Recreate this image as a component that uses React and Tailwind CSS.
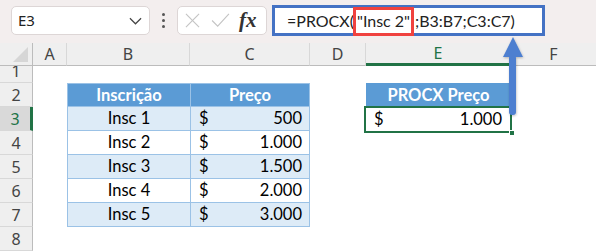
import React from 'react';

/* ── Data ───────────────────────────────────────────────────── */
const COLS = [
  { id: 'A', w: 'w-[34px]' },
  { id: 'B', w: 'w-[123px]' },
  { id: 'C', w: 'w-[120px]' },
  { id: 'D', w: 'w-[56px]' },
  { id: 'E', w: 'w-[145px]' },
  { id: 'F', w: 'flex-1' },
];
const ITEMS = [
  { name: 'Insc 1', price: '500' },
  { name: 'Insc 2', price: '1.000' },
  { name: 'Insc 3', price: '1.500' },
  { name: 'Insc 4', price: '2.000' },
  { name: 'Insc 5', price: '3.000' },
];

const UI = { fontFamily: '"Noto Sans", "Open Sans", sans-serif' };
const CELL = { fontFamily: 'Lato, "Noto Sans", sans-serif' };

/* ── Top bar ────────────────────────────────────────────────── */
const TopBar = () => (
  <div className="h-[43px] bg-[#f3eeee] flex items-start pt-[5px] pl-[11px] shrink-0" style={UI}>
    {/* Name box */}
    <div className="w-[139px] h-[29px] mt-[1px] bg-white rounded-[5px] border border-[#ddd6d6] flex items-center justify-between pl-[6px] pr-[7px]">
      <span className="text-[15px] text-[#222]">E3</span>
      <svg viewBox="0 0 14 8" className="w-[13px] h-[8px]" fill="none" stroke="#444" strokeWidth="1.3">
        <polyline points="1,1 7,7 13,1" />
      </svg>
    </div>
    {/* Dots */}
    <div className="w-[27px] h-[31px] flex flex-col items-center justify-center gap-[3px]">
      <span className="w-[3px] h-[3px] bg-[#555] rounded-full" />
      <span className="w-[3px] h-[3px] bg-[#555] rounded-full" />
      <span className="w-[3px] h-[3px] bg-[#555] rounded-full" />
    </div>
    {/* Cancel / enter / fx */}
    <div className="w-[90px] h-[29px] mt-[1px] bg-white rounded-[5px] border border-[#ddd6d6] flex items-center pl-[7px]">
      <svg viewBox="0 0 16 16" className="w-[15px] h-[15px]" fill="none" stroke="#c4c4c4" strokeWidth="1.2">
        <line x1="1" y1="1" x2="15" y2="15" />
        <line x1="15" y1="1" x2="1" y2="15" />
      </svg>
      <svg viewBox="0 0 20 16" className="w-[19px] h-[15px] ml-[11px]" fill="none" stroke="#c4c4c4" strokeWidth="1.2">
        <polyline points="1,8 7,14 19,1" />
      </svg>
      <span className="ml-[9px] text-[21px] italic font-semibold text-[#333] leading-none" style={{ fontFamily: '"Liberation Serif", "DejaVu Serif", serif' }}>
        fx
      </span>
    </div>
    {/* Formula bar */}
    <div
      className="ml-[5px] w-[273px] h-[31px] border-[3px] border-[#4472c4] bg-white flex items-center pl-[12px] text-[16px] text-[#222] whitespace-nowrap"
      style={{ fontFamily: 'Lato, "Noto Sans", sans-serif' }}
    >
      <span>=PROCX(</span>
      <span className="relative ml-[3px] mr-[5px]">
        "Insc 2"
        <span className="absolute -left-[4px] -right-[4px] -top-[2px] -bottom-[3px] border-[3px] border-[#f0423f]" />
      </span>
      <span>;B3:B7;C3:C7)</span>
    </div>
  </div>
);

/* ── Sheet pieces ───────────────────────────────────────────── */
const RowHeader = ({ r }) => {
  const active = r === 3;
  const first = r === 1;
  return (
    <div
      className={`w-[33px] shrink-0 flex justify-center overflow-hidden text-[16px] leading-[24px] border-b border-b-[#d8d8d8] ${
        first ? 'items-end' : 'items-center'
      } ${
        active
          ? 'bg-[#d9d9d9] text-[#217346] border-r-[3px] border-r-[#217346]'
          : 'bg-[#efefef] text-[#444] border-r border-r-[#bcbcbc]'
      }`}
      style={UI}
    >
      <span className={first ? 'block h-[24px] -mb-[1px]' : 'block'}>{r}</span>
    </div>
  );
};

const HeaderRow = () => (
  <div className="h-[23px] flex shrink-0">
    <div className="relative w-[33px] shrink-0 bg-[#efefef] border-r border-b border-[#bcbcbc]">
      <svg className="absolute right-[4px] bottom-[3px] w-[15px] h-[15px]" viewBox="0 0 15 15">
        <polygon points="15,0 15,15 0,15" fill="#d6d6d6" />
      </svg>
    </div>
    {COLS.map(c => {
      const active = c.id === 'E';
      return (
        <div
          key={c.id}
          className={`${c.w} shrink-0 flex items-center justify-center text-[16px] bg-[#efefef] ${
            c.id !== 'F' ? 'border-r border-r-[#d8d8d8]' : ''
          } ${active ? 'text-[#217346] border-b-[3px] border-b-[#217346]' : 'text-[#444] border-b border-b-[#bcbcbc]'}`}
          style={UI}
        >
          {c.id}
        </div>
      );
    })}
  </div>
);

const SheetRow = ({ r }) => {
  const idx = r - 3;
  const item = ITEMS[idx];
  const band = idx % 2 === 0 ? 'bg-[#ddebf7]' : 'bg-white';
  const h = r === 1 ? 'h-[17px]' : 'h-[24px]';

  return (
    <div className={`${h} flex shrink-0 text-[16.5px] text-black`} style={CELL}>
      <RowHeader r={r} />
      <div className="w-[34px] shrink-0" />

      {r === 2 ? (
        <>
          <div className="w-[123px] shrink-0 bg-[#5b9bd5] border border-r-0 border-[#9bc2e6] flex items-center justify-center text-white font-bold">
            Inscrição
          </div>
          <div className="w-[120px] shrink-0 bg-[#5b9bd5] border border-[#9bc2e6] flex items-center justify-center text-white font-bold">
            Preço
          </div>
        </>
      ) : item ? (
        <>
          <div className={`w-[123px] shrink-0 ${band} border-l border-b border-[#9bc2e6] flex items-center justify-center`}>
            {item.name}
          </div>
          <div className={`w-[120px] shrink-0 ${band} border-l border-r border-b border-[#9bc2e6] flex items-center justify-between pl-[8px] pr-[7px]`}>
            <span>$</span>
            <span>{item.price}</span>
          </div>
        </>
      ) : (
        <div className="w-[243px] shrink-0" />
      )}

      <div className="w-[56px] shrink-0" />

      {r === 2 ? (
        <div className="w-[145px] shrink-0 bg-[#5b9bd5] flex items-center justify-center text-white font-bold">
          PROCX Preço
        </div>
      ) : r === 3 ? (
        <div className="relative w-[145px] shrink-0 bg-white flex items-center justify-between pl-[8px] pr-[9px]">
          <span>$</span>
          <span>1.000</span>
          <span className="absolute -left-[2px] -right-[1px] -top-[1px] -bottom-[2px] border-[2px] border-[#217346]" />
          <span className="absolute -right-[4px] -bottom-[5px] w-[6px] h-[6px] bg-[#217346] border border-white" />
        </div>
      ) : (
        <div className="w-[145px] shrink-0" />
      )}

      <div className="flex-1" />
    </div>
  );
};

/* ── Arrow overlay ──────────────────────────────────────────── */
const Arrow = () => (
  <svg className="absolute left-[500px] top-[35px] w-[26px] h-[84px] pointer-events-none" viewBox="0 0 26 84">
    <defs>
      <filter id="sh" x="-50%" y="-20%" width="200%" height="140%">
        <feDropShadow dx="0.5" dy="1" stdDeviation="1" floodColor="#000" floodOpacity="0.25" />
      </filter>
    </defs>
    <g filter="url(#sh)">
      <rect x="9" y="20" width="7" height="60" rx="3" fill="#4e7fd0" />
      <polygon points="13,2 3,22 23,22" fill="#4e7fd0" />
    </g>
  </svg>
);

export default function App() {
  return (
    <div className="relative w-[596px] h-[252px] bg-white overflow-hidden flex flex-col">
      <TopBar />
      <HeaderRow />
      {[1, 2, 3, 4, 5, 6, 7, 8].map(r => <SheetRow key={r} r={r} />)}
      <Arrow />
    </div>
  );
}
